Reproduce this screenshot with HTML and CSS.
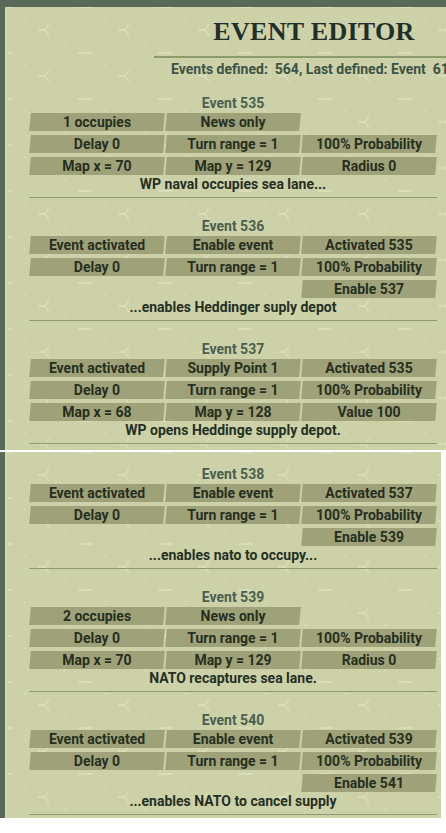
FILE: index.html
```html
<!DOCTYPE html>
<html lang="en">
<head>
    <meta charset="UTF-8">
    <meta name="viewport" content="width=device-width, initial-scale=1.0">
    <title>Event Editor</title>
    <link rel="stylesheet" href="styles.css">
</head>
<body>
    <div class="page">
        <div class="part part-top">
            <div class="panel">
                <div class="head">
                    <h1 class="title">EVENT EDITOR</h1>
                    <p class="stats">Events defined:  564, Last defined: Event  610</p>
                </div>

                <div class="events">
                    <div class="event event-first">
                        <p class="ev-name">Event 535</p>
                        <div class="grid">
                            <span class="cell">1 occupies</span>
                            <span class="cell">News only</span>
                            <span></span>
                            <span class="cell">Delay 0</span>
                            <span class="cell">Turn range = 1</span>
                            <span class="cell">100% Probability</span>
                            <span class="cell">Map x = 70</span>
                            <span class="cell">Map y = 129</span>
                            <span class="cell">Radius 0</span>
                        </div>
                        <p class="ev-desc">WP naval occupies sea lane...</p>
                    </div>

                    <div class="event">
                        <p class="ev-name">Event 536</p>
                        <div class="grid">
                            <span class="cell">Event activated</span>
                            <span class="cell">Enable event</span>
                            <span class="cell">Activated 535</span>
                            <span class="cell">Delay 0</span>
                            <span class="cell">Turn range = 1</span>
                            <span class="cell">100% Probability</span>
                            <span></span>
                            <span></span>
                            <span class="cell">Enable 537</span>
                        </div>
                        <p class="ev-desc">...enables Heddinger suply depot</p>
                    </div>

                    <div class="event">
                        <p class="ev-name">Event 537</p>
                        <div class="grid">
                            <span class="cell">Event activated</span>
                            <span class="cell">Supply Point 1</span>
                            <span class="cell">Activated 535</span>
                            <span class="cell">Delay 0</span>
                            <span class="cell">Turn range = 1</span>
                            <span class="cell">100% Probability</span>
                            <span class="cell">Map x = 68</span>
                            <span class="cell">Map y = 128</span>
                            <span class="cell">Value 100</span>
                        </div>
                        <p class="ev-desc">WP opens Heddinge supply depot.</p>
                    </div>
                </div>
            </div>
        </div>

        <div class="seam"></div>

        <div class="part part-bottom">
            <div class="panel">
                <div class="events">
                    <div class="event event-cont">
                        <p class="ev-name">Event 538</p>
                        <div class="grid">
                            <span class="cell">Event activated</span>
                            <span class="cell">Enable event</span>
                            <span class="cell">Activated 537</span>
                            <span class="cell">Delay 0</span>
                            <span class="cell">Turn range = 1</span>
                            <span class="cell">100% Probability</span>
                            <span></span>
                            <span></span>
                            <span class="cell">Enable 539</span>
                        </div>
                        <p class="ev-desc">...enables nato to occupy...</p>
                    </div>

                    <div class="event">
                        <p class="ev-name">Event 539</p>
                        <div class="grid">
                            <span class="cell">2 occupies</span>
                            <span class="cell">News only</span>
                            <span></span>
                            <span class="cell">Delay 0</span>
                            <span class="cell">Turn range = 1</span>
                            <span class="cell">100% Probability</span>
                            <span class="cell">Map x = 70</span>
                            <span class="cell">Map y = 129</span>
                            <span class="cell">Radius 0</span>
                        </div>
                        <p class="ev-desc">NATO recaptures sea lane.</p>
                    </div>

                    <div class="event">
                        <p class="ev-name">Event 540</p>
                        <div class="grid">
                            <span class="cell">Event activated</span>
                            <span class="cell">Enable event</span>
                            <span class="cell">Activated 539</span>
                            <span class="cell">Delay 0</span>
                            <span class="cell">Turn range = 1</span>
                            <span class="cell">100% Probability</span>
                            <span></span>
                            <span></span>
                            <span class="cell">Enable 541</span>
                        </div>
                        <p class="ev-desc">...enables NATO to cancel supply</p>
                    </div>
                </div>
            </div>
        </div>
    </div>
</body>
</html>
```

FILE: styles.css
```css
body {
    margin: 0;
    background-color: #ffffff;
    overflow: hidden;
    font-family: Roboto, "Liberation Sans", sans-serif;
}

.page {
    width: 446px;
}

.part {
    background-color: #5a6a58;
    padding-left: 5px;
}

.part-top {
    padding-top: 7px;
    width: 441px;
}

.part-bottom {
    width: 436px;
}

.panel {
    background-color: #cdd1a7;
    background-image: url("data:image/svg+xml,%3Csvg xmlns='http://www.w3.org/2000/svg' width='80' height='46'%3E%3Cg stroke='%23dde0bf' stroke-width='1.3' fill='none'%3E%3Cpath d='M0 0h7M0 0l-4 -6M0 0l-4 6M80 0h-7M80 0l4 -6M80 0l4 6M0 46h7M80 46h-7M40 23h-7M40 23l4 -6M40 23l4 6'/%3E%3C/g%3E%3Ccircle cx='20' cy='12' r='1' fill='%23d9dcb9'/%3E%3Ccircle cx='60' cy='35' r='1' fill='%23d9dcb9'/%3E%3C/svg%3E");
    box-shadow: inset 7px 0 0 -5px #d3d7b0;
    overflow: hidden;
}

.part-top .panel {
    padding-bottom: 6px;
}

.part-bottom .panel {
    padding-bottom: 3px;
}

/* title block, wider than the window so the right side gets cut */
.head {
    margin-left: 149px;
    width: 320px;
    text-align: center;
}

.title {
    margin: 0;
    padding: 10px 0 9px;
    font-family: "Liberation Serif", serif;
    font-size: 26px;
    line-height: 30px;
    font-weight: bold;
    letter-spacing: 0.3px;
    color: #1f2f2a;
    border-bottom: 2px solid #8b9b6b;
}

.stats {
    margin: 3px 0 0;
    font-size: 14px;
    line-height: 16px;
    font-weight: bold;
    color: #3b5346;
    white-space: pre;
}

.events {
    margin-left: 24px;
    width: 408px;
}

.event {
    padding: 19px 0 4px;
    border-bottom: 1px solid #8e9a72;
}

.event-first {
    padding-top: 17px;
}

.event-cont {
    padding-top: 13px;
}

.ev-name {
    margin: 0 0 1px;
    font-size: 14px;
    line-height: 18px;
    font-weight: bold;
    text-align: center;
    color: #4a5f4f;
}

.grid {
    display: grid;
    grid-template-columns: repeat(3, 134px);
    grid-auto-rows: 18px;
    gap: 4px 2px;
    padding: 0 1px;
}

.cell {
    position: relative;
    z-index: 0;
    font-size: 14px;
    line-height: 18px;
    font-weight: bold;
    text-align: center;
    color: #262f20;
    white-space: nowrap;
}

.cell::before {
    content: "";
    position: absolute;
    inset: 0;
    z-index: -1;
    background-color: #9fa279;
    transform: skewX(-5deg);
}

.ev-desc {
    margin: 0;
    font-size: 14px;
    line-height: 18px;
    font-weight: bold;
    text-align: center;
    color: #243023;
}

.seam {
    height: 2px;
    background-color: #ffffff;
}
```
